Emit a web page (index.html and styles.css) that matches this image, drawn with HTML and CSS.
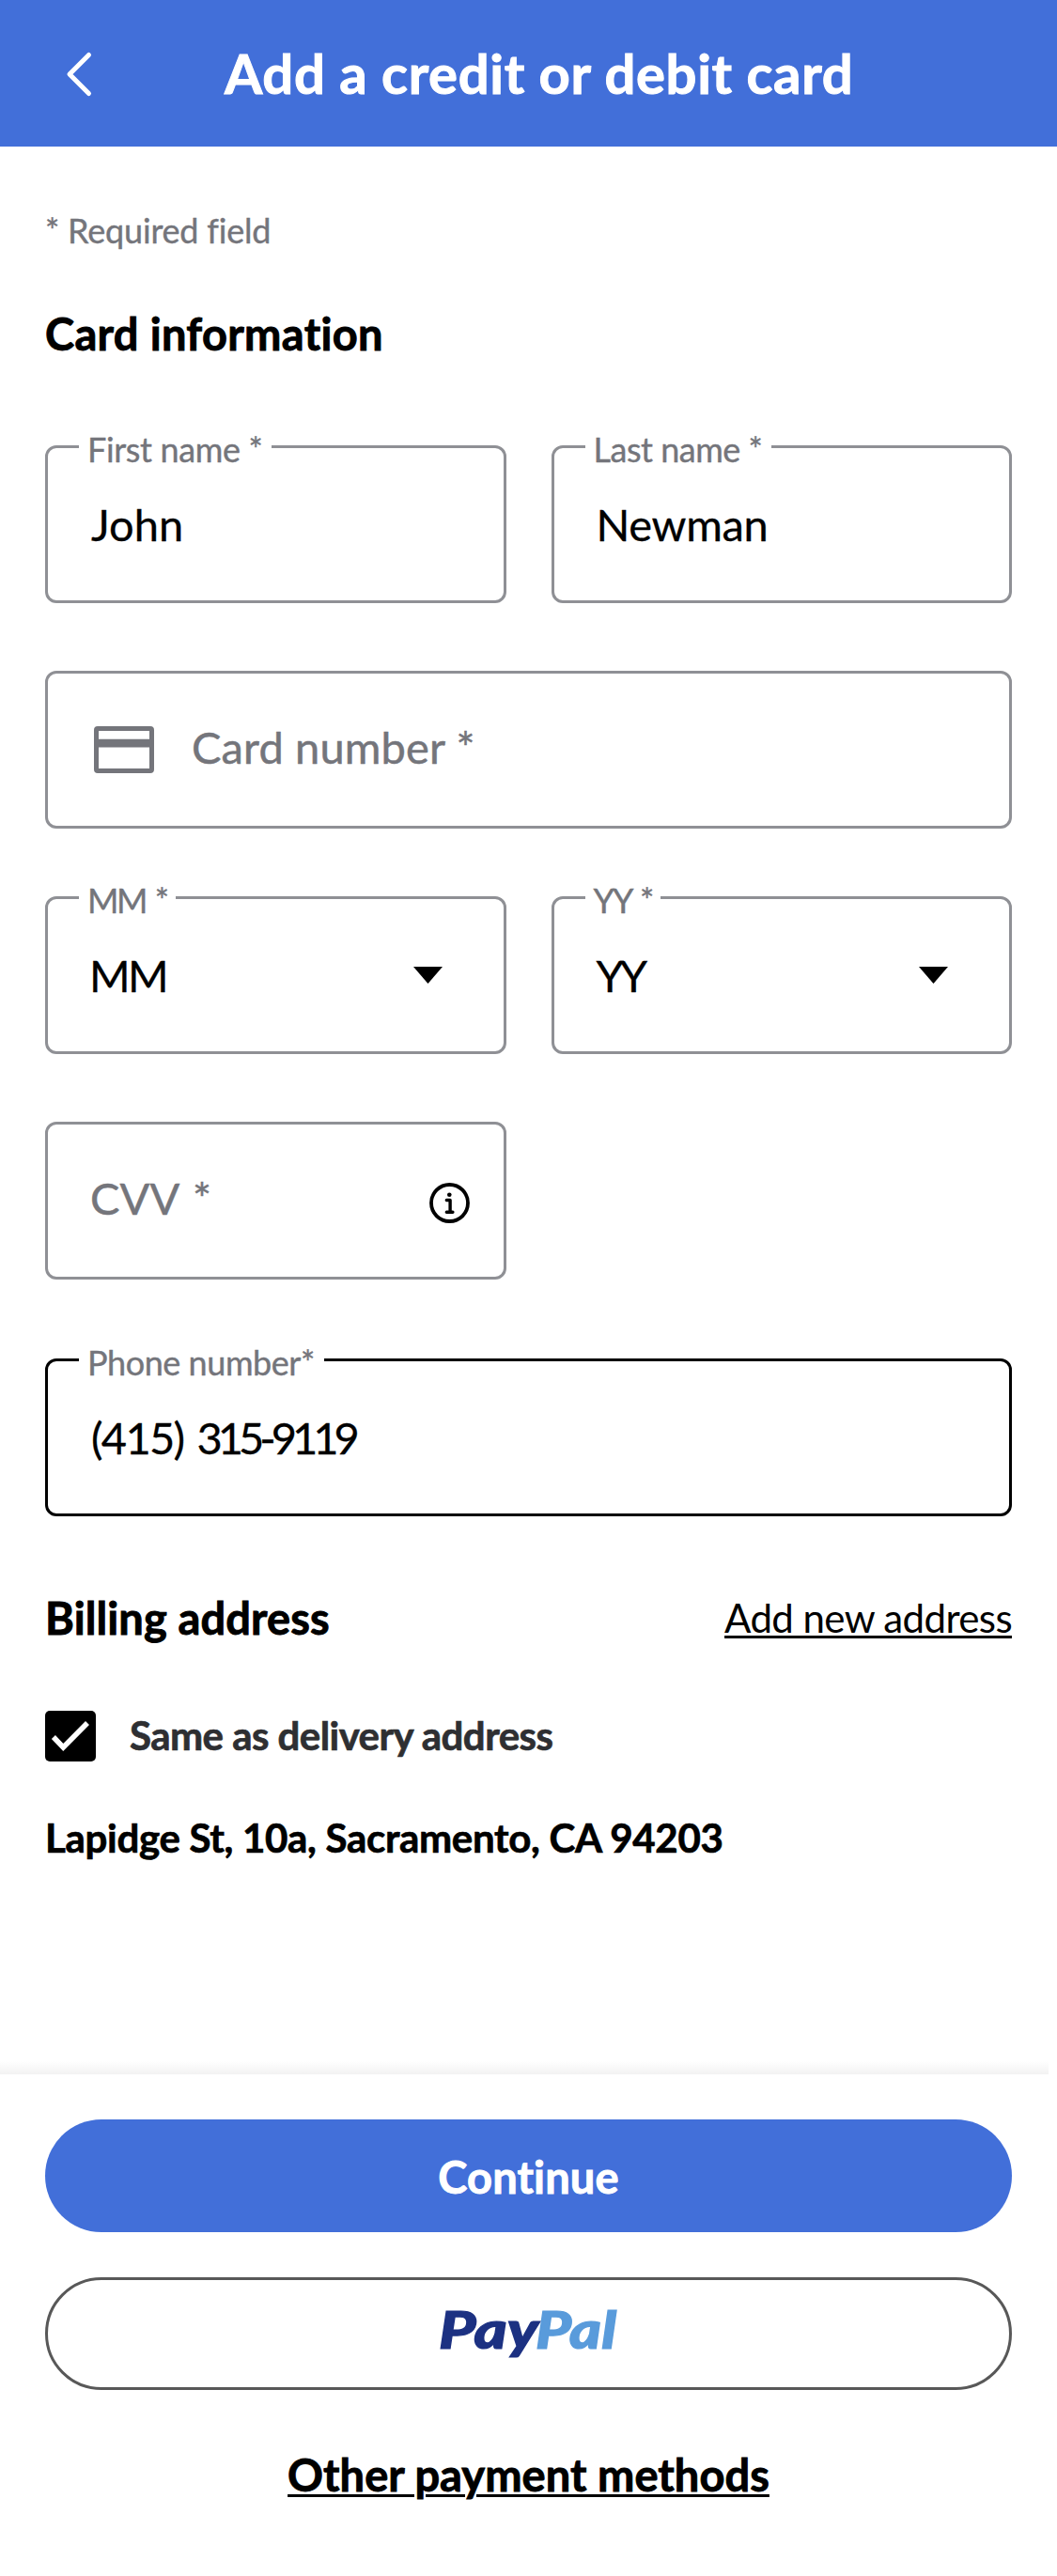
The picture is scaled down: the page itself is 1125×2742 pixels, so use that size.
FILE: index.html
```html
<!DOCTYPE html>
<html lang="en">
<head>
<meta charset="utf-8">
<title>Add a credit or debit card</title>
<link rel="stylesheet" href="styles.css">
</head>
<body>
<header class="header">
  <svg class="back" width="30" height="50" viewBox="0 0 30 50" fill="none" stroke="#fff" stroke-width="5" stroke-linecap="round" stroke-linejoin="round"><path d="M25.5 4.5 5 25l20.500 20.500"/></svg>
  <h1 class="title">Add a credit or debit card</h1>
</header>
<main class="main">
  <p class="required">* Required field</p>
  <h2 class="heading heading-card">Card information</h2>
  <form class="form">
    <div class="field">
      <label class="label">First name *</label>
      <span class="value">John</span>
    </div>
    <div class="field">
      <label class="label label-last">Last name *</label>
      <span class="value value-last">Newman</span>
    </div>
    <div class="field field-wide field-card">
      <svg class="card-icon" width="64" height="50" viewBox="0 0 64 50"><rect x="2.500" y="2.500" width="59" height="45" rx="1.500" fill="none" stroke="#74757b" stroke-width="5"/><path fill="#74757b" d="M3 13.700h58v8.700H3z"/></svg>
      <span class="placeholder">Card number *</span>
    </div>
    <div class="field">
      <label class="label label-mm">MM *</label>
      <span class="value value-mm">MM</span>
      <svg class="caret" width="31" height="18" viewBox="0 0 31 18"><path d="M0 0h31L15.500 18z"/></svg>
    </div>
    <div class="field">
      <label class="label label-yy">YY *</label>
      <span class="value value-yy">YY</span>
      <svg class="caret" width="31" height="18" viewBox="0 0 31 18"><path d="M0 0h31L15.500 18z"/></svg>
    </div>
    <div class="field field-cvv">
      <span class="placeholder placeholder-cvv">CVV *</span>
      <svg class="info" width="43" height="43" viewBox="0 0 43 43" fill="none" stroke="#000" stroke-width="3.400" stroke-linecap="round" stroke-linejoin="round"><circle cx="21.500" cy="21.500" r="19.500" stroke-width="3.800"/><path d="M18.300 18.500h3.800v12.700M18.300 31.200h6.600"/><circle cx="21.300" cy="12.800" r="2.300" fill="#000" stroke="none"/></svg>
    </div>
    <div class="field field-wide field-phone">
      <label class="label label-phone">Phone number*</label>
      <span class="value value-phone"><span class="area">(415)</span> 315-9119</span>
    </div>
  </form>
  <div class="billing">
    <h2 class="heading">Billing address</h2>
    <a class="add-link">Add new address</a>
  </div>
  <div class="same">
    <svg class="checkbox" width="54" height="54" viewBox="0 0 54 54"><rect width="54" height="54" rx="5"/><path d="M8.900 28 19.300 39 45 13" fill="none" stroke="#fff" stroke-width="5.600"/></svg>
    <span class="same-text">Same as delivery address</span>
  </div>
  <p class="address">Lapidge St, 10a, Sacramento, CA 94203</p>
  <div class="shade"></div>
</main>
<footer class="footer">
  <button class="btn btn-primary">Continue</button>
  <button class="btn btn-paypal">
    <svg class="paypal" width="220" height="100" viewBox="0 0 220 100"><text class="paypal-text" x="14" y="65.500" textLength="106" lengthAdjust="spacingAndGlyphs" fill="#1c3182" stroke="#1c3182">Pay</text><text class="paypal-text" x="117" y="65.500" textLength="86" lengthAdjust="spacingAndGlyphs" fill="#599bdb" stroke="#599bdb">Pal</text></svg>
  </button>
  <a class="other">Other payment methods</a>
</footer>
</body>
</html>
```
FILE: styles.css
```css
* { box-sizing: border-box; }
body { margin: 0; background: #fff; color: #000; font-family: Lato, sans-serif; font-size: 47px; }
h1, h2, p { margin: 0; }

.header { display: flex; align-items: flex-start; gap: 140px; height: 156px; padding: 42px 0 0 69px; background: #426fd9; color: #fff; }
.back { margin-top: 12px; }
.title { font-size: 58px; line-height: 71px; letter-spacing: 0.65px; white-space: nowrap; -webkit-text-stroke: 1px; }

.main { display: flex; flex-direction: column; height: 2052px; padding: 67px 48px 0; }
.required { font-size: 36px; line-height: 44px; letter-spacing: -0.2px; color: #74757b; -webkit-text-stroke: 0.4px; }
.heading { font-size: 47px; line-height: 56px; letter-spacing: 0.12px; -webkit-text-stroke: 0.9px; }
.heading-card { margin-top: 60px; letter-spacing: 0.34px; }

.form { display: grid; grid-template-columns: 1fr 1fr; gap: 72px 48px; margin-top: 91px; }
.field { position: relative; display: flex; align-items: center; height: 168px; padding-left: 46px; border: 3px solid #8f9095; border-radius: 12px; line-height: 56px; }
.field-wide { grid-column: 1 / -1; }
.field-card { gap: 40px; padding: 0 0 7px 49px; }
.field-cvv { justify-content: space-between; padding: 0 36px 6px 45px; }
.field-phone { margin-top: 12px; border-color: #000; }
.label { position: absolute; top: -19px; left: 33px; padding: 0 9px; background: #fff; color: #74757b; font-size: 36px; line-height: 40px; letter-spacing: -0.35px; white-space: nowrap; -webkit-text-stroke: 0.4px; }
.label-last { padding-right: 10px; letter-spacing: -0.49px; }
.label-mm { letter-spacing: -2.4px; word-spacing: 3px; }
.label-yy { letter-spacing: -2.05px; word-spacing: 3px; }
.label-phone { padding-right: 10px; letter-spacing: -0.45px; }
.value { -webkit-text-stroke: 0.3px; }
.value-last { margin-left: -1px; letter-spacing: -0.33px; }
.value-mm { margin-left: -2px; letter-spacing: -2.6px; }
.value-yy { margin-left: -1px; letter-spacing: -4px; }
.value-phone { letter-spacing: -5px; word-spacing: 7px; }
.area { letter-spacing: -1.7px; }
.placeholder { color: #74757b; letter-spacing: 0.15px; -webkit-text-stroke: 0.5px; }
.placeholder-cvv { word-spacing: 3px; }
.card-icon { margin-top: 6px; }
.caret { margin: 0 65px 0 auto; }
.info { margin-top: 11px; }

.billing { display: flex; justify-content: space-between; margin-top: 80px; }
.add-link { font-size: 42px; line-height: 56px; letter-spacing: -0.6px; text-decoration: underline 3px; text-underline-offset: 3px; }
.same { display: flex; align-items: center; gap: 36px; height: 54px; margin-top: 71px; }
.same-text { padding-bottom: 2px; font-size: 42px; line-height: 50px; font-weight: 700; letter-spacing: -0.55px; color: #2e2f32; -webkit-text-stroke: 0.7px; }
.address { margin: 56px 0 0; font-size: 42px; line-height: 50px; font-weight: 700; letter-spacing: -0.31px; -webkit-text-stroke: 0.7px; }
.shade { width: 1116px; height: 14px; margin: auto 0 0 -48px; background: linear-gradient(#fff, #f2f2f2); }

.footer { display: flex; flex-direction: column; align-items: center; gap: 48px; height: 534px; padding: 48px 48px 0; }
.btn { display: flex; align-items: center; justify-content: center; width: 100%; height: 120px; flex: none; padding: 0; border: 0; border-radius: 60px; background: #fff; font: 700 47px/56px Lato, sans-serif; }
.btn-primary { padding-top: 2px; background: #426fd9; color: #fff; letter-spacing: 0.14px; -webkit-text-stroke: 0.9px; }
.btn-paypal { border: 3px solid #585858; }
.paypal { overflow: visible; }
.paypal-text { font: italic 900 55px Lato, sans-serif; stroke-width: 1.2px; }
.other { margin-top: 14px; font-weight: 700; line-height: 56px; letter-spacing: 0.05px; text-decoration: underline 3px; text-underline-offset: 3px; -webkit-text-stroke: 0.9px; }
```
